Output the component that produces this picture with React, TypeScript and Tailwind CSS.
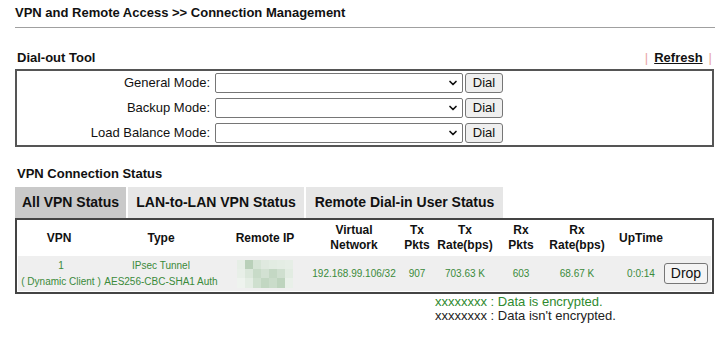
import { ChevronDown } from "lucide-react";

const modes = ["General Mode:", "Backup Mode:", "Load Balance Mode:"];

// blurred remote ip mosaic shades
const mosaic = [
  ["#e6eee6", "#b9d0b9", "#d6e4d6", "#dfe9df", "#e2ece2", "#e4ede4", "#e6eee6"],
  ["#e8efe8", "#dbe7db", "#c8dbc8", "#d2e1d2", "#c4d8c4", "#cfdfcf", "#e2ece2"],
  ["#eef3ee", "#e4ede4", "#cfe0cf", "#c2d7c2", "#cadcca", "#bed4be", "#e9f0e9"],
];

function Cell({ children, className = "" }: { children: React.ReactNode; className?: string }) {
  return <div className={`flex items-center justify-center text-center ${className}`}>{children}</div>;
}

export default function App() {
  return (
    <div className="w-[728px] h-[343px] bg-white font-['Liberation_Sans',Arial,sans-serif] text-[#111] overflow-hidden">
      {/* title */}
      <div className="pl-[15px] pt-[5px] text-[13px] leading-[16px] font-bold">
        VPN and Remote Access &gt;&gt; Connection Management
      </div>
      <div className="ml-[15px] mt-[6px] w-[700px] h-px bg-[#a0a0a0]" />

      {/* dial-out tool */}
      <div className="ml-[17px] mt-[22px] w-[695px] flex justify-between text-[13px] leading-[16px] font-bold">
        <span>Dial-out Tool</span>
        <span className="flex gap-[6px]">
          <span className="text-[#e8a4a4] font-normal">|</span>
          <span className="underline">Refresh</span>
          <span className="text-[#e8a4a4] font-normal">|</span>
        </span>
      </div>
      <div className="ml-[15px] mt-[3px] w-[699px] border-2 border-[#555] pt-[2px] pb-[2px] flex flex-col gap-[5px]">
        {modes.map((m) => (
          <div key={m} className="flex items-center h-[20px] text-[13px]">
            <div className="w-[193px] text-right">{m}</div>
            <div className="ml-[5px] w-[248px] h-[20px] border border-[#767676] rounded-[2px] bg-white flex items-center justify-end pr-[3px]">
              <ChevronDown size={12} strokeWidth={3.4} className="text-[#111]" />
            </div>
            <button className="ml-[2px] w-[38px] h-[20px] border border-[#767676] rounded-[3px] bg-[#efefef] text-[13px] leading-[18px]">
              Dial
            </button>
          </div>
        ))}
      </div>

      {/* vpn connection status */}
      <div className="ml-[17px] mt-[19px] text-[13px] leading-[16px] font-bold">VPN Connection Status</div>
      <div className="ml-[15px] mt-[5px] flex gap-[2px] text-[14px] font-bold h-[31px]">
        <div className="w-[111px] bg-[#c9c9c9] flex items-center justify-center">All VPN Status</div>
        <div className="w-[176px] bg-[#e6e6e6] flex items-center justify-center">LAN-to-LAN VPN Status</div>
        <div className="w-[197px] bg-[#e6e6e6] flex items-center justify-center">Remote Dial-in User Status</div>
      </div>
      <div className="ml-[15px] w-[699px] border-2 border-[#444] px-px pb-px">
        <div className="grid grid-cols-[86px_114px_94px_84px_42px_54px_58px_54px_60px_47px] h-[36px] text-[12px] leading-[15px] font-bold">
          <Cell className="pr-[4px]">VPN</Cell>
          <Cell>Type</Cell>
          <Cell>Remote IP</Cell>
          <Cell>Virtual<br />Network</Cell>
          <Cell>Tx<br />Pkts</Cell>
          <Cell>Tx<br />Rate(bps)</Cell>
          <Cell>Rx<br />Pkts</Cell>
          <Cell>Rx<br />Rate(bps)</Cell>
          <Cell className="pl-[14px]">UpTime</Cell>
          <div />
        </div>
        <div className="grid grid-cols-[86px_114px_94px_84px_42px_54px_58px_54px_60px_47px] h-[35px] bg-[#efefef] text-[10px] leading-[16px] text-[#3a8a3a]">
          <Cell className="whitespace-nowrap">1<br />( Dynamic Client )</Cell>
          <Cell className="whitespace-nowrap">IPsec Tunnel<br />AES256-CBC-SHA1 Auth</Cell>
          <Cell>
            <div className="grid grid-cols-7 w-[56px] h-[28px]">
              {mosaic.flat().map((c, i) => (
                <div key={i} style={{ background: c }} />
              ))}
            </div>
          </Cell>
          <Cell className="whitespace-nowrap">192.168.99.106/32</Cell>
          <Cell>907</Cell>
          <Cell>703.63 K</Cell>
          <Cell>603</Cell>
          <Cell>68.67 K</Cell>
          <Cell className="pl-[14px]">0:0:14</Cell>
          <div className="flex items-center">
            <button className="w-[44px] h-[21px] border border-[#767676] rounded-[3px] bg-[#f4f4f4] text-[14px] leading-[19px] text-[#111]">
              Drop
            </button>
          </div>
        </div>
      </div>

      {/* legend */}
      <div className="ml-[435px] mt-[1px] text-[13px] leading-[14px]">
        <div className="text-[#2f8a2f]">xxxxxxxx : Data is encrypted.</div>
        <div className="text-[#222]">xxxxxxxx : Data isn't encrypted.</div>
      </div>
    </div>
  );
}
